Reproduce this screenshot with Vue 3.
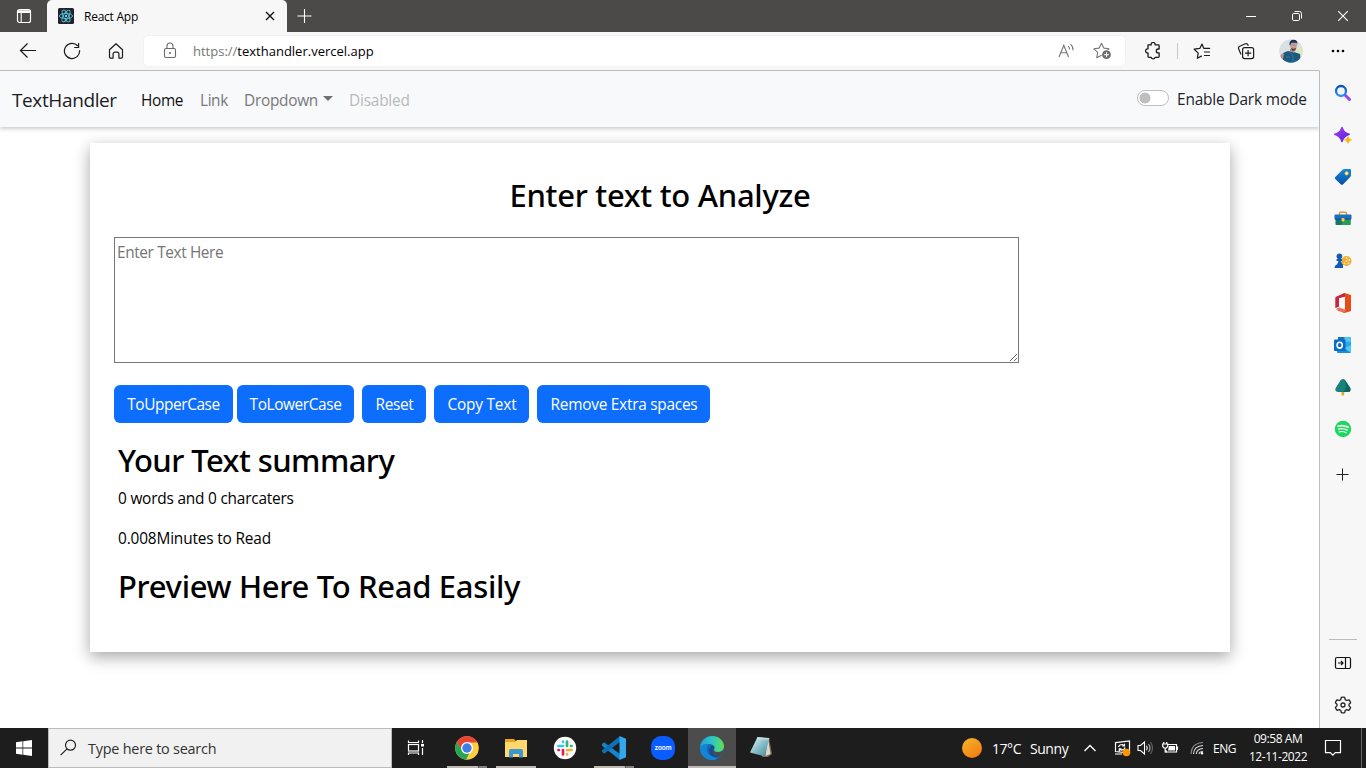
<script setup>
import { ref } from 'vue'
const text = ref('')
</script>

<template>
  <div class="screen">
    <!-- Tab strip -->
    <header class="titlebar">
      <div class="tabmenu">
        <svg width="16" height="16" viewBox="0 0 16 16" fill="none" stroke="#fff"><rect x="1.5" y="1.5" width="13" height="13" rx="2" stroke-width="1.2" /><path d="M2 3h12M2 4.2h12" stroke-width="1.4" /><path d="M5.2 4.5v9.8" stroke-width="1.1" /></svg>
      </div>
      <div class="tab">
        <svg width="16" height="16" viewBox="0 0 16 16"><rect width="16" height="16" rx="1.5" fill="#20232a" /><g fill="none" stroke="#57c4dc" stroke-width=".9"><ellipse cx="8" cy="8" rx="6.6" ry="2.6" /><ellipse cx="8" cy="8" rx="6.6" ry="2.6" transform="rotate(60 8 8)" /><ellipse cx="8" cy="8" rx="6.6" ry="2.6" transform="rotate(120 8 8)" /></g><circle cx="8" cy="8" r="1.2" fill="#61dafb" /></svg>
        <span class="tabtitle">React App</span>
        <svg class="tabclose" width="10" height="10" viewBox="0 0 10 10"><path d="M1 1l8 8M9 1l-8 8" stroke="#111" stroke-width="1.4" /></svg>
      </div>
      <svg class="newtab" width="16" height="16" viewBox="0 0 16 16"><path d="M7.500 1v14M.5 8h14" stroke="#fff" stroke-width="1.1" /></svg>
      <div class="winctl">
        <svg width="12" height="12" viewBox="0 0 12 12"><path d="M1 6.5h10" stroke="#fff" /></svg>
        <svg width="12" height="12" viewBox="0 0 12 12" fill="none" stroke="#fff"><rect x="1.5" y="3.5" width="7" height="7" rx="1.3" /><path d="M3.5 1.5h5a2 2 0 0 1 2 2v5" /></svg>
        <svg width="12" height="12" viewBox="0 0 12 12"><path d="M1.2 1.2l9.6 9.6M10.8 1.2L1.2 10.8" stroke="#fff" stroke-width="1.1" /></svg>
      </div>
    </header>

    <!-- Address bar -->
    <div class="toolbar">
      <div class="navbtns">
        <svg width="18" height="18" viewBox="0 0 18 18" fill="none" stroke="#1b1b1b" stroke-width="1.2"><path d="M17 8.500H1.500M8.500 1.500L1.500 8.500l7 7" /></svg>
        <svg width="18" height="18" viewBox="0 0 18 18" fill="none" stroke="#1b1b1b" stroke-width="1.2"><path d="M16.6 8.2A7.6 7.6 0 1 1 14.8 4M15.6 1v4.5h-4.4" /></svg>
        <svg width="18" height="18" viewBox="0 0 18 18" fill="none" stroke="#1b1b1b" stroke-width="1.2" stroke-linejoin="round"><path d="M2.5 7.7L9 1.8l6.5 5.9v7.1a1.3 1.3 0 0 1-1.3 1.3h-2.3v-4a2 2 0 0 0-2-2H8.100a2 2 0 0 0-2 2v4H3.800a1.300 1.300 0 0 1-1.300-1.300z" /></svg>
      </div>
      <div class="address">
        <svg class="lock" width="14" height="18" viewBox="0 0 14 18" fill="none" stroke="#6b6b6b" stroke-width="1.100"><rect x="1.500" y="6.500" width="11" height="9" rx="1.500" /><path d="M4 6.500V4a3 3 0 0 1 6 0v2.500" /><circle cx="7" cy="11" r=".9" fill="#555" stroke="none" /></svg>
        <span class="url"><span class="scheme">https://</span>texthandler.vercel.app</span>
        <svg class="read" width="17" height="16" viewBox="0 0 17 16" fill="none" stroke="#767676" stroke-width="1.100"><path d="M1 14L5.800 2.200l4.800 11.800M2.800 9.800h6M10.200 3.200q1.500 1.300 1.300 3.300M12.400 1.200q3 2.600 2.600 6.200" /></svg>
        <svg class="addfav" width="19" height="18" viewBox="0 0 19 18"><path d="M8.500 1.200l2.300 4.900 5.200.7-3.800 3.700 .9 5.200-4.600-2.500-4.700 2.500.9-5.300L.9 6.800l5.300-.7z" fill="none" stroke="#767676" stroke-width="1.100" stroke-linejoin="round" /><circle cx="13.500" cy="12.700" r="5" fill="#fff" /><circle cx="13.500" cy="12.700" r="4.400" fill="#6e6e6e" /><path d="M13.500 10.200v5M11 12.700h5" stroke="#fff" /></svg>
      </div>
      <div class="actions">
        <svg class="ext" width="18" height="18" viewBox="0 0 18 18" fill="none" stroke="#1b1b1b" stroke-width="1.300" stroke-linejoin="round"><path d="M4 2.900h3.200a2 2 0 1 1 3.900 0h3.200q.8 0 .8.800v3.300h-.9a1.900 1.900 0 1 0 0 3.800h.9v3.700q0 .8-.8.800h-3.200a2 2 0 0 1-3.900 0H4.800q-.8 0-.8-.8v-3.700a2 2 0 1 1 0-3.900z" /></svg>
        <i class="sep"></i>
        <svg class="favs" width="18" height="18" viewBox="0 0 18 18" fill="none" stroke="#1b1b1b" stroke-width="1.200" stroke-linejoin="round"><path d="M10.800 6.400L9 2 6.800 6.400 1.200 7.200l4 3.900-.9 5.200 4.500-2.400M10.800 6.400h6.300M11 10h6M11 13.500h6" /></svg>
        <svg class="coll" width="18" height="18" viewBox="0 0 18 18" fill="none" stroke="#1b1b1b" stroke-width="1.200"><path d="M4 12.400L1.700 7A2 2 0 0 1 2.700 4.200L8.300 1.800a2 2 0 0 1 2.600 1l.4 1" /><rect x="5.600" y="5.600" width="11" height="11" rx="2" /><path d="M11.100 8v6.200M8 11.100h6.200" /></svg>
        <svg class="avatar" width="24" height="24" viewBox="0 0 24 24"><defs><clipPath id="face"><circle cx="12" cy="12" r="11.800" /></clipPath></defs><g clip-path="url(#face)"><path d="M0 0h24v24H0z" fill="#dadfe2" /><path d="M17 8h7v11h-7z" fill="#dfe8c4" /><path d="M2 24l0-7q1-3 7-5l6 1 6 2 1 9z" fill="#1b5980" /><path d="M11 10h5l-1 4-4-2z" fill="#bc8174" /><path d="M1 17q2-3 4-2l-1 5H1z" fill="#c48d86" /><ellipse cx="14.500" cy="6.500" rx="3.300" ry="4.600" fill="#d09a90" /><path d="M10.500 6q-.5-5 4-5.500 4.500 0 3.700 5l-.9-1.800h-5l-1 2.600z" fill="#1d3452" /><path d="M11.800 9q3 1.500 5.400 0l-1 2.500h-3z" fill="#4a3b44" /><path d="M11.500 6h6" stroke="#5fa9cc" stroke-width=".8" /><path d="M11 13l3 4v8M7 18h4" stroke="#37779c" fill="none" /></g></svg>
        <svg class="more" width="16" height="4" viewBox="0 0 16 4"><circle cx="3" cy="2" r="1.300" /><circle cx="8" cy="2" r="1.300" /><circle cx="13" cy="2" r="1.300" /></svg>
      </div>
    </div>

    <div class="middle">
      <!-- Page -->
      <main class="page">
        <nav class="navbar">
          <a class="brand">TextHandler</a>
          <a class="home">Home</a>
          <a class="link">Link</a>
          <a class="dropdown">Dropdown</a><i class="caret"></i>
          <a class="disabled">Disabled</a>
          <span class="switch"></span>
          <label class="dark">Enable Dark mode</label>
        </nav>
        <section class="card">
          <h1 class="title">Enter text to Analyze</h1>
          <textarea v-model="text" class="input" placeholder="Enter Text Here"></textarea>
          <div class="buttons">
            <button class="btn upper">ToUpperCase</button>
            <button class="btn lower">ToLowerCase</button>
            <button class="btn reset">Reset</button>
            <button class="btn copy">Copy Text</button>
            <button class="btn spaces">Remove Extra spaces</button>
          </div>
          <div class="summary">
            <h2 class="h-sum">Your Text summary</h2>
            <p class="words">0 words and 0 charcaters</p>
            <p class="minutes">0.008Minutes to Read</p>
            <h2 class="h-prev">Preview Here To Read Easily</h2>
          </div>
        </section>
      </main>

      <!-- Edge sidebar -->
      <aside class="sidebar">
        <svg viewBox="0 0 18 18"><defs><linearGradient id="lens" x1="0" x2="0" y1="0" y2="1"><stop stop-color="#0c50b8" /><stop offset="1" stop-color="#2e8cf0" /></linearGradient></defs><path d="M11 11l4.500 4.500" stroke="#9a42ea" stroke-width="3" stroke-linecap="round" /><circle cx="7" cy="7" r="5" fill="#edf6ff" stroke="url(#lens)" stroke-width="2.300" /></svg>
        <svg viewBox="0 0 18 18"><defs><linearGradient id="spark" x2="1" y2="1"><stop stop-color="#a63cf3" /><stop offset="1" stop-color="#5524d6" /></linearGradient></defs><path d="M8 1.500Q9.800 7 15.200 8.300 9.800 10 8 15.500 6.200 10 .8 8.300 6.200 7 8 1.500z" fill="url(#spark)" stroke="url(#spark)" stroke-width="1.500" stroke-linejoin="round" /><path d="M14 10.500q.6 2.600 3.400 3.300-2.700.7-3.400 3.500-.7-2.800-3.400-3.500 2.700-.7 3.400-3.300z" fill="#f7b614" stroke="#f7b614" stroke-width=".8" /></svg>
        <svg viewBox="0 0 18 18"><defs><linearGradient id="tag" x2="0" y2="1"><stop stop-color="#1687dd" /><stop offset="1" stop-color="#0b4fa2" /></linearGradient></defs><path d="M8.500 1.700q.7-.7 2-.7h5.500q1 0 1 1v5q0 1.200-1 2.300l-6.800 7q-1.300 1-2.500 0L1.300 11q-1-1 0-2.100z" fill="url(#tag)" /><circle cx="12.600" cy="5.300" r="1.600" fill="#fff3b5" stroke="#ffc928" /></svg>
        <svg class="toolbox" viewBox="0 0 18 18"><path d="M5.500 5V3.500q0-1.200 1.200-1.200h4.600q1.200 0 1.200 1.200V5" fill="none" stroke="#e09a1c" stroke-width="1.500" /><rect x="1.500" y="7" width="15" height="8" rx="1" fill="#13776a" /><path d="M10 9h6.500v6H7z" fill="#259b55" /><rect x=".5" y="4.500" width="17" height="5" rx="1" fill="#1770c3" /><path d="M1 9h16" stroke="#104d92" /><rect x="7.500" y="8" width="3" height="3.600" rx=".8" fill="#ffc738" /></svg>
        <svg viewBox="0 0 18 18"><circle cx="12.500" cy="9" r="5" fill="#f4ab32" /><g fill="#fff0ba"><circle cx="12.500" cy="9" r=".9" /><circle cx="12.500" cy="6" r=".9" /><circle cx="15.300" cy="8" r=".9" /><circle cx="14.500" cy="11.300" r=".9" /><circle cx="10.500" cy="11.300" r=".9" /></g><path d="M2.800 12.500q1.200-1 1.600-3.500H2.600V7h1.300Q2.500 5.800 2.500 4.500a2.900 2.900 0 0 1 5.800 0Q8.300 5.800 7 7h1v2H7q.5 2.500 2 3.500V16H.8v-2z" fill="#125cb2" /></svg>
        <svg class="office" viewBox="0 0 18 20"><path d="M10.500 0L17 2v16l-6.500 2L2 16.800l9 .5V3.500L5 5v8.500L1.500 15V5z" fill="#e64b19" /><path d="M10.500 0L1.500 4v11L5 13.500V5l6-1.500z" fill="#c6273c" /><path d="M2 16.200L5 14.500l7 2.500-1.500 3z" fill="#f56a5a" /></svg>
        <svg viewBox="0 0 18 18"><rect x="4" y="1" width="13" height="11" rx="1" fill="#28a8ea" /><path d="M4 1h6.500v5H4z" fill="#1573bc" /><path d="M10.500 1H17v5h-6.500z" fill="#4fc3f4" /><path d="M3 9l8 3 6-3v7q0 1-1 1H4q-1 0-1-1z" fill="#178fdc" /><path d="M17 9v8l-7-5z" fill="#50c8f5" /><rect x="0" y="3.500" width="11.500" height="11.500" rx="1" fill="#086dc3" /><ellipse cx="5.700" cy="9.200" rx="2.600" ry="2.900" fill="none" stroke="#fff" stroke-width="1.600" /></svg>
        <svg viewBox="0 0 18 18"><path d="M7.500 12h2.700v5q-1.300 1-2.700 0z" fill="#eba526" /><path d="M6.700 2q2.200-2.200 4.400 0L16.300 10q1.200 3.700-2.300 4H4q-3.700-.4-2.300-4z" fill="#16847b" /><path d="M10 1.300l6.300 8.700q1 4-2.300 4H9q5-4 1-12.700z" fill="#0d675f" /></svg>
        <svg viewBox="0 0 18 18"><circle cx="9" cy="9" r="8.200" fill="#1ed760" /><g fill="none" stroke="#f4fff7" stroke-linecap="round"><path d="M4 6.300q5.300-1.700 10.200 1" stroke-width="1.700" /><path d="M4.700 9.200q4.500-1.400 8.600.9" stroke-width="1.400" /><path d="M5.200 11.900q3.800-1.100 7.100.8" stroke-width="1.200" /></g></svg>
        <svg class="plus" viewBox="0 0 18 18"><path d="M8.500 2.500v12M2.500 8.500h12" stroke="#202020" /></svg>
        <i class="rule"></i>
        <svg class="panel" viewBox="0 0 18 18" fill="none" stroke="#111" stroke-width="1.200"><rect x="1.500" y="3.500" width="15" height="11" rx="1.500" /><path d="M11.500 3.500v11M4 9h5M7 7l2 2-2 2" /></svg>
        <svg viewBox="0 0 18 18" fill="none" stroke="#222" stroke-width="1.300" stroke-linejoin="round"><path d="M7.300 1.400Q9 .9 10.700 1.400l.5 2.200 1.500.9 2.200-.7q1.300 1.300 1.700 2.900L15 8.200v1.700l1.600 1.500q-.4 1.600-1.700 2.900l-2.200-.7-1.500.9-.5 2.200q-1.700.5-3.400 0l-.5-2.200-1.500-.9-2.200.7q-1.300-1.300-1.700-2.900L3 9.900V8.200L1.400 6.700q.4-1.600 1.700-2.900l2.200.7 1.500-.9z" /><circle cx="9" cy="9" r="2" /></svg>
      </aside>
    </div>

    <!-- Windows taskbar -->
    <footer class="taskbar">
      <div class="start"><svg width="16" height="16" viewBox="0 0 16 16" fill="#fff"><path d="M0 2.200l6.500-.9v6.300H0zM7.200 1.200L16 0v7.600H7.200zM0 8.400h6.500v6.300L0 13.800zM7.200 8.400H16V16l-8.800-1.200z" /></svg></div>
      <div class="search">
        <svg width="18" height="18" viewBox="0 0 18 18" fill="none" stroke="#222" stroke-width="1.200"><circle cx="10.500" cy="6.200" r="5" /><path d="M7 9.800L.6 16.200" /></svg>
        <span>Type here to search</span>
      </div>
      <div class="apps">
        <div class="app view"><svg width="18" height="18" viewBox="0 0 18 18" fill="none" stroke="#fff" stroke-width="1.200"><path d="M1.500 1.500v2h10v-2M1.500 16v-2h10v2M15.500 1v3M15.500 9v7" /><rect x="1.500" y="5.500" width="10" height="6.500" /><path d="M14 6.200h3" stroke-width="2.600" /></svg></div>
        <div class="app run multi">
          <svg width="24" height="24" viewBox="0 0 24 24"><circle cx="12" cy="12" r="11.800" fill="#ffcd40" /><path d="M1.800 6.100A11.800 11.800 0 0 1 22.300 6.500H12L7 15z" fill="#e94335" /><path d="M1.800 6.100L7.500 15q2 2.600 6.900 2L11 23.800A11.800 11.800 0 0 1 1.800 6.100z" fill="#29a653" /><circle cx="12" cy="12" r="6" fill="#fff" /><circle cx="12" cy="12" r="4.700" fill="#3f7de8" /></svg>
        </div>
        <div class="app run">
          <svg width="24" height="24" viewBox="0 0 24 24"><path d="M1 3h9l2 2h11v16H1z" fill="#e8a620" /><path d="M1 6h10l2-2h10v17H1z" fill="#ffd76a" /><path d="M5 21.500v-6.500q0-2 2-2h10q2 0 2 2v6.500h-4V18H9v3.500z" fill="#3e97d2" /></svg>
        </div>
        <div class="app">
          <svg width="24" height="24" viewBox="0 0 24 24" fill="none" stroke-width="2.700" stroke-linecap="round"><circle cx="12" cy="12" r="11.200" fill="#fff" /><g stroke="#36c5f0"><path d="M5.500 10h4.500M10 5.500v.6" /></g><g stroke="#2eb67d"><path d="M14 5.500v4.500M18 10h.5" /></g><g stroke="#ecb22e"><path d="M14 14h4.500M14 18v.5" /></g><g stroke="#e01e5a"><path d="M10 14v4.500M5.500 14h.5" /></g></svg>
        </div>
        <div class="app run multi">
          <svg width="24" height="24" viewBox="0 0 24 24"><path d="M0 8l2-1.800L18 18v6L0 9.700z" fill="#1684cb" /><path d="M0 15.800l2 2L18 6V0L0 14.300z" fill="#0d71b5" /><path d="M17.500 0L24 2.700v18.600L17.500 24z" fill="#32a6ee" /></svg>
        </div>
        <div class="app">
          <svg width="24" height="24" viewBox="0 0 24 24"><rect width="24" height="24" rx="10" fill="#0b5cff" /><text x="12" y="14" text-anchor="middle" fill="#fff" font-family="Inter, sans-serif" font-weight="600" font-size="6.500" textLength="17">zoom</text></svg>
        </div>
        <div class="app active">
          <svg width="26" height="26" viewBox="0 0 26 26"><defs><linearGradient id="wave" x1="0" x2="1"><stop stop-color="#259edc" /><stop offset=".55" stop-color="#30c8c0" /><stop offset="1" stop-color="#68df47" /></linearGradient></defs><circle cx="13" cy="13" r="12" fill="#1169b9" /><path d="M1 12C2 5 7 1 13 1c7 0 12 5 12 10 0 4-3 6-6 6-4 0-5-1.500-4-3 .9-2-.5-5-5-5-4 0-7 1-9 3z" fill="url(#wave)" /><path d="M1 12q4-4 9-2.500c-3 2-3 7 0 10q4 3.500 9 4A12 12 0 0 1 1 12z" fill="#1385d4" /><path d="M15.500 13q-2 2-.5 4 2.500 2.500 8 .5-2 5-6 4.500-6-.5-7-5.500 0-4 3-6 3 .5 2.500 2.500z" fill="#164c8d" /><path d="M14.800 14.200q-.5 2.500 4 2.900 3 0 5.500-1.600L23 20q-5 2-8-.5t-.2-5.300z" fill="#4c4c4c" /></svg>
        </div>
        <div class="app">
          <svg width="26" height="26" viewBox="0 0 26 26"><defs><linearGradient id="note" x2="1" y2="1"><stop stop-color="#eefcfd" /><stop offset=".5" stop-color="#86bdc8" /><stop offset="1" stop-color="#408996" /></linearGradient></defs><path d="M21 3l3 16-4 3h-6z" fill="#7d6a50" /><path d="M20 3l2.500 16-5 2z" fill="#ddd9ce" /><path d="M9.500 2l12 1-5 18.500-14.500-4z" fill="url(#note)" /><path d="M9.500 3l11 1" stroke="#dce6e8" stroke-width="2" stroke-dasharray="1 1" /></svg>
        </div>
      </div>
      <div class="weather"><i class="sun"></i><span class="temp">17°C</span><span class="cond">Sunny</span></div>
      <div class="tray">
        <svg class="chev" width="14" height="10" viewBox="0 0 14 10"><path d="M1.500 8L7 2.500 12.500 8" fill="none" stroke="#fff" stroke-width="1.300" /></svg>
        <svg class="sync" width="18" height="18" viewBox="0 0 18 18" fill="none" stroke="#fff" stroke-width="1.200"><path d="M2.500 3.700l14-1.700v12l-14-1.500zM2 15h7M5.500 8.200q.5-2.700 4-2.700l2 1.500M11.500 4.800V7H9.300M12 8.300q-.5 2.700-3.700 2.900L6.500 10M6.300 12.200V9.900h2.200" /><circle cx="13.400" cy="13.500" r="3.800" fill="#ff9500" stroke="none" /></svg>
        <svg class="vol" width="17" height="16" viewBox="0 0 17 16" fill="none" stroke="#fff" stroke-width="1.100"><path d="M1 5.500h2.500L7.500 2v12l-4-3.500H1z" /><path d="M9.500 5.800q1.500 2.200 0 4.400" /><path d="M11.500 4q3 4 0 8" stroke="#bbb" /><path d="M13.500 2.300q4 5.700 0 11.400" stroke="#666" /></svg>
        <svg class="bat" width="17" height="14" viewBox="0 0 17 14" fill="none" stroke="#fff" stroke-width="1.200"><path d="M6 3.500h8.500v7.500H4V9M15.500 5.500v3.500" /><path d="M1.700 1v2M4.700 1v2M.7 3h5v2.500L4.300 7H2.100L.7 5.500zM3.200 7v4H5" /><path d="M7 5h6v4.500H6z" fill="#fff" stroke="none" /></svg>
        <svg class="wifi" width="14" height="14" viewBox="0 0 14 14" fill="none" stroke="#ddd" stroke-width="1.100"><path d="M1 13Q1.500 2 13 1.500" stroke="#888" /><path d="M3.500 13Q4 5 13 4.500M6.200 13q.5-5 6.800-5.500M9 13q.3-2.300 4-2.500" /><circle cx="12" cy="12.300" r="1.200" fill="#fff" stroke="none" /></svg>
        <span class="lang">ENG</span>
        <div class="clock"><span class="time">09:58 AM</span><span class="date">12-11-2022</span></div>
        <svg class="notif" width="18" height="18" viewBox="0 0 18 18" fill="none" stroke="#fff" stroke-width="1.200"><path d="M1.500 1.500h15v12.200h-5.200L8.800 16.200l-2.500-2.500H1.500z" /></svg>
        <i class="peek"></i>
      </div>
    </footer>
  </div>
</template>

<style>
html, body { margin: 0; overflow: hidden; }
</style>

<style scoped>
* { box-sizing: border-box; }
svg { display: block; flex: none; }
i { display: block; flex: none; }
span, a, label { white-space: nowrap; }
.screen { width: 1366px; height: 768px; display: flex; flex-direction: column; overflow: hidden; background: #fff; font-family: "Open Sans", "Noto Sans", sans-serif; font-size: 15.4px; color: #000; }

.titlebar { height: 32px; flex: none; display: flex; align-items: center; background: #4b4a48; }
.tabmenu { width: 47px; padding-left: 16px; }
.tab { width: 240px; height: 32px; display: flex; align-items: center; padding: 0 12px 0 11px; background: #f7f7f7; border-radius: 5px 5px 0 0; }
.tabtitle { flex: 1; margin-left: 10px; font-size: 12px; letter-spacing: -.25px; }
.newtab { margin-left: 10px; }
.winctl { margin-left: auto; display: flex; gap: 34px; padding-right: 17px; }

.toolbar { height: 39px; flex: none; display: flex; align-items: center; background: #f7f7f7; border-bottom: 1px solid #bcbcbc; }
.navbtns { display: flex; gap: 26px; width: 144px; padding-left: 19px; }
.address { width: 981px; height: 30px; display: flex; align-items: center; background: #fff; border-radius: 4px; box-shadow: 0 0 2px rgba(0, 0, 0, .08); padding: 0 13px 0 19px; }
.url { margin-left: 16px; font-size: 13px; }
.scheme { color: #767676; }
.read { margin-left: auto; margin-right: 18px; }
.actions { flex: 1; display: flex; align-items: center; }
.ext { margin-left: 19px; }
.sep { width: 1px; height: 16px; margin-left: 15px; background: #c8c8c8; }
.favs { margin-left: 15px; }
.coll { margin-left: 26px; }
.avatar { margin-left: 24px; }
.more { margin-left: 27px; }

.middle { flex: 1; min-height: 0; display: flex; }
.page { width: 1319px; height: 657px; overflow: hidden; background: #fff; }
.navbar { height: 56px; display: flex; align-items: center; padding: 2px 12px 0; background: #f8f9fb; box-shadow: 0 2px 4px rgba(0, 0, 0, .2); }
.brand { width: 129px; font-size: 19px; letter-spacing: -.38px; color: #1d1e1f; }
.home { width: 59px; letter-spacing: -.35px; color: #111; }
.link { width: 44px; letter-spacing: -.4px; color: #777879; }
.dropdown { width: 79px; letter-spacing: -.28px; color: #777879; }
.caret { width: 10px; border: 5px solid transparent; border-top-color: #707172; border-bottom: 0; margin-bottom: 4px; }
.disabled { margin-left: 16px; letter-spacing: -.2px; color: #b8b9ba; }
.switch { width: 32px; height: 16px; margin-left: auto; margin-bottom: 4px; border: 1px solid #bfbfbf; border-radius: 8px; background: radial-gradient(circle at 7px 7px, #bfbfbf 5.2px, #fff 5.800px); }
.dark { width: 130px; margin: 0 0 2px 8px; letter-spacing: -.15px; color: #212529; }

.card { width: 1140px; height: 509px; margin: 16px 0 0 90px; padding: 33px 24px 0; background: #fff; box-shadow: 0 5px 15px rgba(0, 0, 0, .35); }
h1, h2 { margin: 0; font: 500 31px/38px "Noto Sans", sans-serif; }
.title { text-align: center; letter-spacing: -.28px; }
.input { display: block; width: 905px; height: 126px; margin: 23px 0 0; padding: 3px 2px 2px; border: 1px solid #767676; border-radius: 0; background: #fff; font: 15.4px/24px "Open Sans", sans-serif; letter-spacing: -.38px; color: #000; outline: 0; }
.input::placeholder { color: #757575; }
.buttons { display: flex; margin-top: 22px; gap: 8px; }
.btn { height: 38px; padding: 2px 0 0; border: 0; border-radius: 6px; background: #0d6efd; color: #fff; font: 15.4px/24px "Open Sans", sans-serif; }
.upper { width: 119px; margin-right: -4px; letter-spacing: -.4px; }
.lower { width: 117px; letter-spacing: -.38px; }
.reset { width: 64px; letter-spacing: -.33px; padding-left: 1px; }
.copy { width: 95px; letter-spacing: -.2px; padding-left: 1px; }
.spaces { width: 173px; letter-spacing: -.25px; padding-left: 1px; }
.summary { padding: 18px 4px 0; }
.h-sum { letter-spacing: -.56px; }
.h-prev { letter-spacing: -.32px; }
p { margin: 0 0 16px; line-height: 24px; }
.words { margin-top: 8px; letter-spacing: -.2px; }
.minutes { letter-spacing: -.16px; }

.sidebar { width: 47px; display: flex; flex-direction: column; align-items: center; gap: 24px; padding: 13px 0 14px; background: #f7f7f7; border-left: 1px solid #bcbcbc; margin-top: -1px; border-top: 1px solid #f7f7f7; }
.sidebar svg { width: 18px; height: 18px; }
.sidebar .office { height: 20px; margin: -1px 0; }
.sidebar .plus { margin-top: 4px; }
.rule { width: 28px; height: 1px; margin-top: auto; margin-bottom: -10px; background: #bcbcbc; }

.taskbar { height: 40px; flex: none; display: flex; align-items: center; background: #1d1d1d; color: #fff; }
.start { width: 48px; padding-left: 16px; }
.search { width: 344px; height: 40px; display: flex; align-items: center; padding-left: 11px; background: #f1f1f1; border: 1px solid #bbb; color: #333; font-size: 14.4px; letter-spacing: -.22px; }
.search span { margin-left: 10px; }
.apps { display: flex; }
.app { width: 49px; height: 40px; display: flex; align-items: center; justify-content: center; padding-right: 1px; position: relative; }
.view { width: 48px; margin-right: 3px; }
.run::after { content: ""; position: absolute; left: 4px; bottom: 0; width: 40px; height: 2px; background: #bdb9b3; }
.multi::after { background: linear-gradient(90deg, #bdb9b3 31px, #555 31px, #555 32px, #83807c 32px); }
.active { width: 48px; margin-right: 1px; padding: 0; background: #4c4c4c; box-shadow: inset 0 -2px #bdb9b3; }
.weather { display: flex; align-items: center; margin-left: 176px; font-size: 14px; letter-spacing: -.45px; }
.sun { width: 20px; height: 20px; border-radius: 50%; background: linear-gradient(145deg, #f3b62e, #f4770d); }
.temp { width: 38px; margin-left: 10px; }
.tray { margin-left: auto; display: flex; align-items: center; font-size: 12px; }
.chev { margin-right: 1px; }
.sync { margin-left: 15px; }
.vol { margin-left: 6px; }
.bat { margin-left: 8px; }
.wifi { margin-left: 11px; }
.lang { width: 24px; margin-left: 9px; letter-spacing: -.45px; }
.clock { width: 60px; margin-left: 11px; display: flex; flex-direction: column; align-items: center; line-height: 18px; letter-spacing: -.44px; }
.notif { margin-left: 16px; }
.peek { width: 1px; height: 40px; margin-left: 19px; margin-right: 4px; background: #666; }
</style>
